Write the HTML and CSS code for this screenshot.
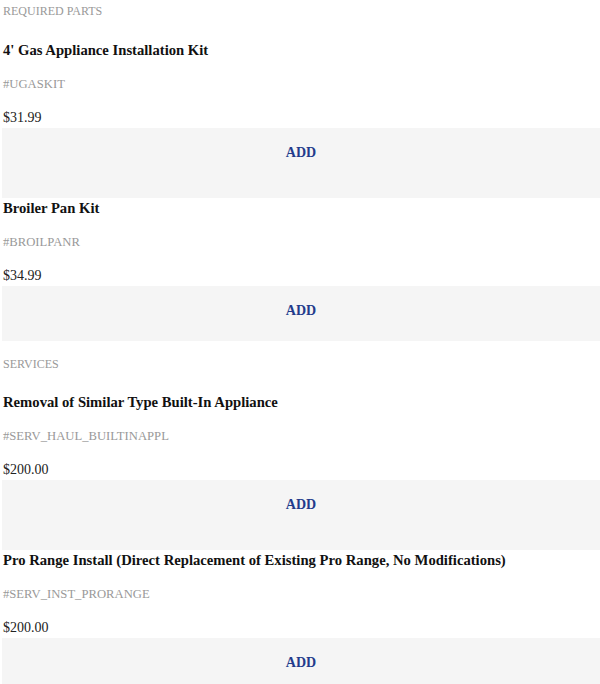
FILE: index.html
```html
<!DOCTYPE html>
<html>
<head>
<meta charset="utf-8">
<link rel="stylesheet" href="styles.css">
</head>
<body>
<div class="page">
  <div class="section-title first">REQUIRED PARTS</div>
  <div class="item">
    <div class="name">4' Gas Appliance Installation Kit</div>
    <div class="sku">#UGASKIT</div>
    <div class="price">$31.99</div>
    <div class="add">ADD</div>
  </div>
  <div class="item">
    <div class="name">Broiler Pan Kit</div>
    <div class="sku">#BROILPANR</div>
    <div class="price">$34.99</div>
    <div class="add short">ADD</div>
  </div>
  <div class="section-title">SERVICES</div>
  <div class="item">
    <div class="name">Removal of Similar Type Built-In Appliance</div>
    <div class="sku">#SERV_HAUL_BUILTINAPPL</div>
    <div class="price">$200.00</div>
    <div class="add">ADD</div>
  </div>
  <div class="item">
    <div class="name">Pro Range Install (Direct Replacement of Existing Pro Range, No Modifications)</div>
    <div class="sku">#SERV_INST_PRORANGE</div>
    <div class="price">$200.00</div>
    <div class="add">ADD</div>
  </div>
</div>
</body>
</html>
```

FILE: styles.css
```css
html, body {
  margin: 0;
  padding: 0;
  background: #ffffff;
}

.page {
  font-family: "Liberation Serif", "Times New Roman", serif;
  font-size: 14px;
  line-height: 20px;
  padding: 1px 0 0 2px;
}

.section-title {
  color: #999999;
  font-size: 12px;
  margin-top: 13px;
  margin-bottom: 18px;
  padding-left: 1px;
}

.section-title.first {
  margin-top: 0;
  margin-bottom: 19px;
}

.item {
  display: flex;
  flex-direction: column;
}

.name {
  font-weight: bold;
  font-size: 14.67px;
  color: #111111;
  padding-left: 1px;
}

.sku {
  color: #999999;
  font-size: 12.67px;
  margin-top: 14px;
  padding-left: 1px;
}

.price {
  color: #222222;
  margin-top: 14px;
  padding-left: 1px;
}

.add {
  background: #f5f5f5;
  color: #233b8c;
  font-weight: bold;
  text-align: center;
  height: 70px;
  box-sizing: border-box;
  padding-top: 15px;
}

.add.short {
  height: 55px;
}
```
